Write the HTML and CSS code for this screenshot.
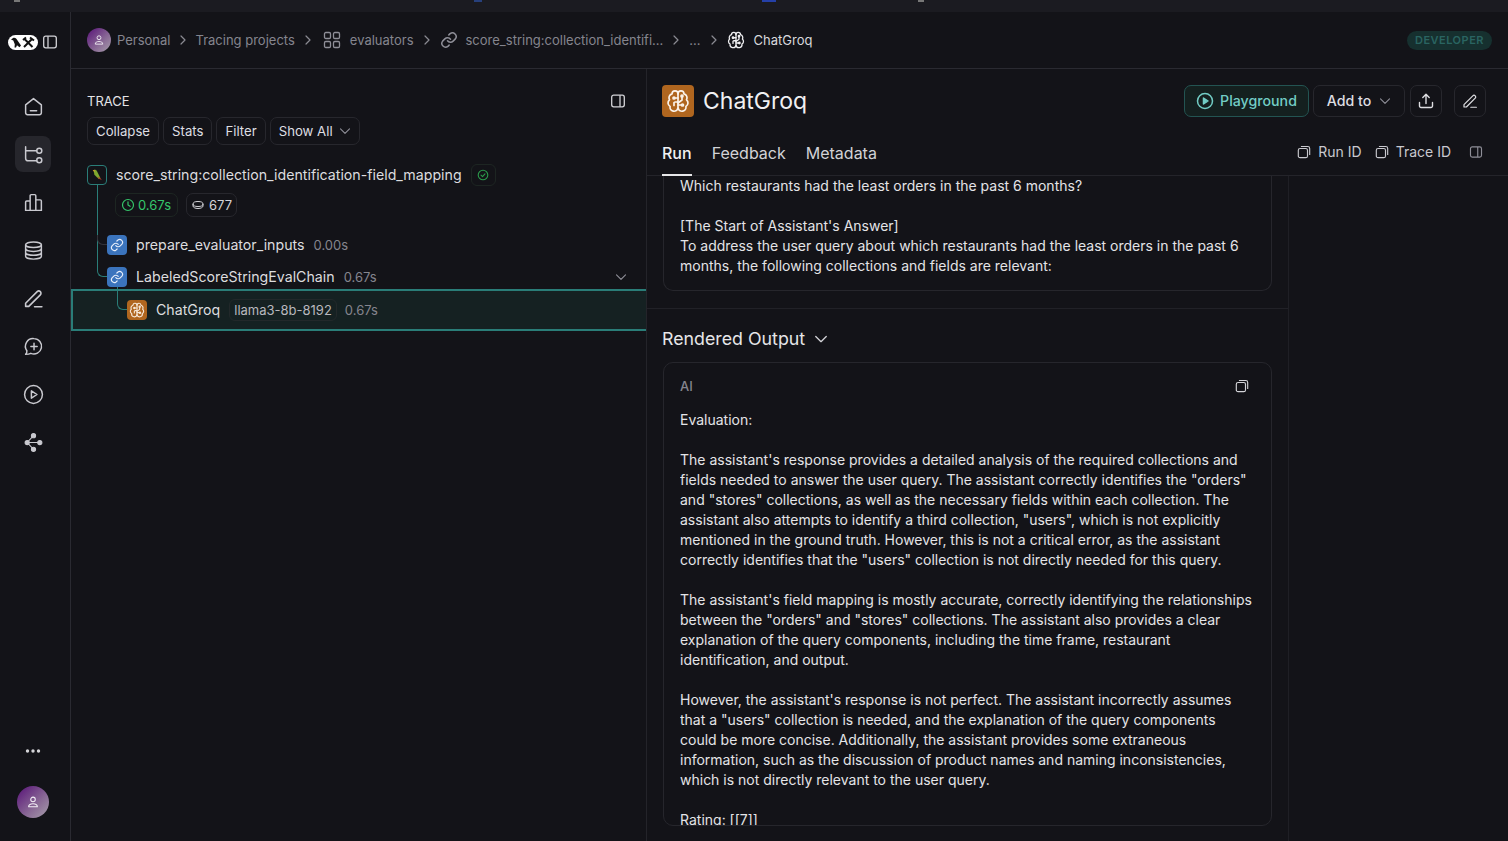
FILE: index.html
```html
<!DOCTYPE html>
<html lang="en">
<head>
<meta charset="utf-8">
<title>ChatGroq</title>
<link rel="stylesheet" href="styles.css">
</head>
<body>
<svg class="defs" width="0" height="0" aria-hidden="true">
  <symbol id="brain" viewBox="0 0 24 24" fill="none" stroke="currentColor" stroke-width="1.7" stroke-linecap="round" stroke-linejoin="round">
    <path d="M12 5a3 3 0 0 0-6-.1 4 4 0 0 0-2.500 5.900 4 4 0 0 0 .6 6.600A4 4 0 0 0 12 19z"/>
    <path d="M12 5a3 3 0 0 1 6-.1 4 4 0 0 1 2.500 5.900 4 4 0 0 1-.6 6.600A4 4 0 0 1 12 19"/>
    <path d="M12 9H9.500M9 13h3M8 16.500v-3M16 8v3l-4 3M15.500 16l-3.500 0"/>
    <circle cx="8" cy="9" r="1"/><circle cx="16" cy="7" r="1"/><circle cx="16.500" cy="16" r="1"/>
  </symbol>
  <symbol id="chain" viewBox="0 0 24 24" fill="none" stroke="currentColor" stroke-width="2" stroke-linecap="round" stroke-linejoin="round">
    <path d="M10 13a5 5 0 0 0 7.500.5l3-3a5 5 0 0 0-7-7l-1.700 1.700"/>
    <path d="M14 11a5 5 0 0 0-7.500-.5l-3 3a5 5 0 0 0 7 7l1.700-1.700"/>
  </symbol>
  <symbol id="copy" viewBox="0 0 16 16" fill="none" stroke="currentColor" stroke-width="1.300" stroke-linejoin="round">
    <rect x="1.500" y="4" width="10.500" height="10.500" rx="2"/>
    <path d="M4.500 1.700h7.800a2.200 2.200 0 0 1 2.200 2.200v7.600"/>
  </symbol>
  <symbol id="panel" viewBox="0 0 16 16" fill="none" stroke="currentColor" stroke-width="1.300">
    <rect x="1.700" y="2.200" width="12.600" height="11.600" rx="2"/>
    <path d="M10 2.200v11.600"/>
  </symbol>
  <symbol id="panel-left" viewBox="0 0 16 16" fill="none" stroke="currentColor" stroke-width="1.300">
    <rect x="1.700" y="2.200" width="12.600" height="11.600" rx="2"/>
    <path d="M6 2.200v11.600"/>
  </symbol>
  <symbol id="pen" viewBox="0 0 20 20" fill="none" stroke="currentColor" stroke-width="1.500" stroke-linecap="round" stroke-linejoin="round">
    <path d="M2.500 17.500v-3L13.500 3.500a2.100 2.100 0 0 1 3 3L5.500 17.500zM11 17.800h7"/>
  </symbol>
  <symbol id="chev" viewBox="0 0 12 12" fill="none" stroke="currentColor" stroke-width="1.100" stroke-linecap="round" stroke-linejoin="round">
    <path d="M1.500 3.800 6 8.300l4.500-4.500"/>
  </symbol>
  <symbol id="crumb" viewBox="0 0 12 12" fill="none" stroke="currentColor" stroke-width="1.200" stroke-linecap="round" stroke-linejoin="round">
    <path d="m4 2 4 4-4 4"/>
  </symbol>
  <symbol id="person" viewBox="0 0 16 16" fill="none" stroke="currentColor" stroke-width="1.200" stroke-linejoin="round">
    <circle cx="8" cy="5" r="2.600"/>
    <path d="M3 13.500c0-2.500 2-3.500 5-3.500s5 1 5 3.500z"/>
  </symbol>
</svg>

<div class="topstrip">
  <i class="speck speck-grey"></i>
  <i class="speck speck-blue"></i>
  <i class="speck speck-blue2"></i>
  <i class="speck speck-grey2"></i>
</div>

<div class="app">
  <nav class="sidebar">
    <div class="brand">
      <svg class="logo" viewBox="0 0 30 15">
        <rect x="0" y="0" width="30" height="15" rx="7.500" fill="#fff"/>
        <path d="M5.500 2.800c1.500-.4 2.700.5 3.700 2.200l3.800 5.500-1.500 1.700-2.500-2-1 2.300H6.500l.3-3.300-1.500-3.700-2.300-1z" fill="#111"/>
        <path d="M16 3.500l8.500 8.500M24.500 3.500l-8.500 8.500M15 5l3-2.500M22 2.500l4 3" stroke="#111" stroke-width="2" fill="none"/>
      </svg>
      <svg class="ic16 light"><use href="#panel-left"/></svg>
    </div>
    <ul class="navlist">
      <li class="navitem">
        <svg viewBox="0 0 20 20" fill="none" stroke="currentColor" stroke-width="1.400" stroke-linejoin="round" stroke-linecap="round"><path d="M2.500 8.500 10 2.500l7.500 6V16a1.800 1.800 0 0 1-1.800 1.800H4.300A1.800 1.800 0 0 1 2.500 16zM7 14h6"/></svg>
      </li>
      <li class="navitem active">
        <svg viewBox="0 0 20 20" fill="none" stroke="currentColor" stroke-width="1.400" stroke-linecap="round"><path d="M2.500 2.500v11a2.500 2.500 0 0 0 2.500 2.500h8M2.500 6.500h10.500"/><circle cx="15.500" cy="6.500" r="2.400"/><circle cx="15.500" cy="15.500" r="2.400"/></svg>
      </li>
      <li class="navitem">
        <svg viewBox="0 0 20 20" fill="none" stroke="currentColor" stroke-width="1.400" stroke-linejoin="round"><path d="M2.500 17.500V9.500a1 1 0 0 1 1-1h3.300v9zM6.800 17.500V3.500a1 1 0 0 1 1-1h3.400a1 1 0 0 1 1 1v14zM12.200 17.500V7.500h4.300a1 1 0 0 1 1 1v9zM1.800 17.500h16.400"/></svg>
      </li>
      <li class="navitem">
        <svg viewBox="0 0 20 20" fill="none" stroke="currentColor" stroke-width="1.400"><ellipse cx="10" cy="4.500" rx="7.500" ry="2.700"/><path d="M2.500 4.500v11c0 1.500 3.400 2.700 7.500 2.700s7.500-1.200 7.500-2.700v-11M2.500 8.200c0 1.500 3.400 2.700 7.500 2.700s7.500-1.200 7.500-2.700M2.500 11.900c0 1.500 3.400 2.700 7.500 2.700s7.500-1.200 7.500-2.700"/></svg>
      </li>
      <li class="navitem">
        <svg><use href="#pen"/></svg>
      </li>
      <li class="navitem">
        <svg viewBox="0 0 20 20" fill="none" stroke="currentColor" stroke-width="1.400" stroke-linecap="round" stroke-linejoin="round"><path d="M10.500 2.500a7.300 7.300 0 1 1-3 14c-1.500.8-3.500 1-5 1 .8-.8 1.300-2 1.200-3.500a7.300 7.300 0 0 1 6.800-11.500zM10.500 7v6M7.500 10h6"/></svg>
      </li>
      <li class="navitem">
        <svg viewBox="0 0 20 20" fill="none" stroke="currentColor" stroke-width="1.400" stroke-linejoin="round"><circle cx="10" cy="10" r="8.500"/><path d="M8 6.500v7l5.300-3.500z"/></svg>
      </li>
      <li class="navitem">
        <svg viewBox="0 0 20 20" fill="currentColor" stroke="currentColor" stroke-width="1"><circle cx="10" cy="3.500" r="2"/><circle cx="4" cy="10" r="2"/><circle cx="16" cy="10" r="2"/><circle cx="10" cy="16.500" r="2"/><path d="M4 10h12M10 3.500 4 10l6 6.500" fill="none"/></svg>
      </li>
    </ul>
    <div class="sidebar-foot">
      <svg class="dots" viewBox="0 0 16 4" fill="currentColor"><circle cx="2.500" cy="2" r="1.700"/><circle cx="8" cy="2" r="1.700"/><circle cx="13.500" cy="2" r="1.700"/></svg>
      <div class="avatar avatar-lg"><svg class="ic14"><use href="#person"/></svg></div>
    </div>
  </nav>

  <div class="main">
    <header class="topbar">
      <div class="avatar avatar-sm"><svg class="ic12"><use href="#person"/></svg></div>
      <span class="crumb c1">Personal</span>
      <svg class="sep"><use href="#crumb"/></svg>
      <span class="crumb">Tracing projects</span>
      <svg class="sep"><use href="#crumb"/></svg>
      <svg class="ic18 mute grid-ic" viewBox="0 0 18 18" fill="none" stroke="currentColor" stroke-width="1.300"><rect x="1.500" y="1.500" width="6" height="6" rx="1.300"/><rect x="10.500" y="1.500" width="6" height="6" rx="1.300"/><rect x="1.500" y="10.500" width="6" height="6" rx="1.300"/><rect x="10.500" y="10.500" width="6" height="6" rx="1.300"/></svg>
      <span class="crumb">evaluators</span>
      <svg class="sep"><use href="#crumb"/></svg>
      <svg class="ic18 mute chain-ic"><use href="#chain"/></svg>
      <span class="crumb">score_string:collection_identifi...</span>
      <svg class="sep"><use href="#crumb"/></svg>
      <span class="crumb">...</span>
      <svg class="sep"><use href="#crumb"/></svg>
      <svg class="ic18 bright"><use href="#brain"/></svg>
      <span class="crumb current">ChatGroq</span>
      <span class="badge">DEVELOPER</span>
    </header>

    <div class="panes">
      <section class="trace">
        <div class="trace-head">
          <h2 class="trace-title">TRACE</h2>
          <svg class="ic16 light"><use href="#panel"/></svg>
        </div>
        <div class="trace-buttons">
          <span class="chip">Collapse</span>
          <span class="chip">Stats</span>
          <span class="chip">Filter</span>
          <span class="chip">Show All <svg class="ic12 mute"><use href="#chev"/></svg></span>
        </div>

        <div class="tree">
          <div class="line-root"></div>
          <div class="elbow elbow-a"></div>
          <div class="elbow elbow-b"></div>
          <div class="elbow elbow-c"></div>

          <div class="node node-root">
            <span class="nodeicon parrot">
              <svg viewBox="0 0 16 16"><path d="M4 2.500c1.500-.8 3-.3 4 1.200l4 8-2 1-5-5z" fill="#7fa82e"/><path d="M3 2.800 5 2l.5 2.500z" fill="#e0a030"/><path d="M9 10l3 1.700 1.500 2-3.500-1.500z" fill="#b33a2a"/></svg>
            </span>
            <span class="nodename">score_string:collection_identification-field_mapping</span>
            <span class="okbadge">
              <svg class="ic12" viewBox="0 0 12 12" fill="none" stroke="#2b9a4b" stroke-width="1.100" stroke-linecap="round" stroke-linejoin="round"><circle cx="6" cy="6" r="4.800"/><path d="m4 6.200 1.500 1.400L8 4.800"/></svg>
            </span>
          </div>
          <div class="metrics">
            <span class="metric good">
              <svg class="ic14" viewBox="0 0 14 14" fill="none" stroke="currentColor" stroke-width="1.200" stroke-linecap="round"><circle cx="7" cy="7" r="5.500"/><path d="M7 3.800V7l2 1.300"/></svg>
              0.67s
            </span>
            <span class="metric count">
              <svg class="ic12 light" viewBox="0 0 12 12" fill="none" stroke="currentColor" stroke-width="1"><ellipse cx="6" cy="5" rx="5" ry="2.500"/><path d="M1 5v2c0 1.400 2.200 2.500 5 2.500s5-1.100 5-2.500V5"/></svg>
              677
            </span>
          </div>

          <div class="node node-a">
            <span class="nodeicon blue"><svg class="ic14"><use href="#chain"/></svg></span>
            <span class="nodename">prepare_evaluator_inputs</span>
            <span class="latency">0.00s</span>
          </div>
          <div class="node node-b">
            <span class="nodeicon blue"><svg class="ic14"><use href="#chain"/></svg></span>
            <span class="nodename">LabeledScoreStringEvalChain</span>
            <span class="latency">0.67s</span>
            <svg class="ic12 mute push"><use href="#chev"/></svg>
          </div>
          <div class="node node-c">
            <span class="nodeicon orange"><svg class="ic16"><use href="#brain"/></svg></span>
            <span class="nodename">ChatGroq</span>
            <span class="model">llama3-8b-8192</span>
            <span class="latency">0.67s</span>
          </div>
        </div>
      </section>

      <section class="detail">
        <div class="detail-head">
          <span class="runicon"><svg class="ic24"><use href="#brain"/></svg></span>
          <h1 class="run-title">ChatGroq</h1>
          <div class="actions">
            <span class="btn btn-play">
              <svg class="ic18" viewBox="0 0 18 18" fill="none" stroke="currentColor" stroke-width="1.500" stroke-linejoin="round"><circle cx="9" cy="9" r="7.500"/><path d="M7.500 6v6L12 9z" fill="currentColor"/></svg>
              Playground
            </span>
            <span class="btn btn-add">Add to <svg class="ic12 mute"><use href="#chev"/></svg></span>
            <span class="btn btn-icon btn-upload">
              <svg class="ic18" viewBox="0 0 18 18" fill="none" stroke="currentColor" stroke-width="1.400" stroke-linecap="round" stroke-linejoin="round"><path d="M9 11.500V2.500M5.800 5.500 9 2.300l3.200 3.200M2.500 10.500v3.500a1.500 1.500 0 0 0 1.500 1.500h10a1.500 1.500 0 0 0 1.500-1.500v-3.500"/></svg>
            </span>
            <span class="btn btn-icon btn-edit"><svg class="ic16"><use href="#pen"/></svg></span>
          </div>
        </div>

        <div class="tabs">
          <span class="tab tab-on">Run</span>
          <span class="tab">Feedback</span>
          <span class="tab">Metadata</span>
          <div class="tab-tools">
            <span class="tool"><svg class="ic14"><use href="#copy"/></svg>Run ID</span>
            <span class="tool"><svg class="ic14"><use href="#copy"/></svg>Trace ID</span>
            <svg class="ic14 mute panel-toggle"><use href="#panel"/></svg>
          </div>
        </div>

        <div class="scroll">
          <div class="column">
            <div class="card card-input">
              <p>Which restaurants had the least orders in the past 6 months?</p>
              <p>[The Start of Assistant's Answer]<br>To address the user query about which restaurants had the least orders in the past 6 months, the following collections and fields are relevant:</p>
            </div>
            <div class="section-head">
              <h3 class="section-title">Rendered Output</h3>
              <svg class="ic14 light"><use href="#chev"/></svg>
            </div>
            <div class="card card-output">
              <div class="role-row">
                <span class="role">AI</span>
                <svg class="ic14 light"><use href="#copy"/></svg>
              </div>
              <div class="output">
                <p>Evaluation:</p>
                <p>The assistant's response provides a detailed analysis of the required collections and fields needed to answer the user query. The assistant correctly identifies the "orders" and "stores" collections, as well as the necessary fields within each collection. The assistant also attempts to identify a third collection, "users", which is not explicitly mentioned in the ground truth. However, this is not a critical error, as the assistant correctly identifies that the "users" collection is not directly needed for this query.</p>
                <p>The assistant's field mapping is mostly accurate, correctly identifying the relationships between the "orders" and "stores" collections. The assistant also provides a clear explanation of the query components, including the time frame, restaurant identification, and output.</p>
                <p>However, the assistant's response is not perfect. The assistant incorrectly assumes that a "users" collection is needed, and the explanation of the query components could be more concise. Additionally, the assistant provides some extraneous information, such as the discussion of product names and naming inconsistencies, which is not directly relevant to the user query.</p>
                <p>Rating: [[7]]</p>
              </div>
            </div>
          </div>
        </div>
      </section>
    </div>
  </div>
</div>
</body>
</html>
```

FILE: styles.css
```css
* { box-sizing: border-box; }
html, body { margin: 0; padding: 0; height: 100%; overflow: hidden; }
body {
  background: #131318;
  color: #e4e4e7;
  font-family: Inter, "Liberation Sans", sans-serif;
  font-size: 14px;
  line-height: 20px;
  display: flex;
  flex-direction: column;
}
h1, h2, h3, p, ul { margin: 0; padding: 0; font-weight: 400; }
ul { list-style: none; }
svg { display: block; flex: none; }
.defs { position: absolute; }

.ic12 { width: 12px; height: 12px; }
.ic14 { width: 14px; height: 14px; }
.ic16 { width: 16px; height: 16px; }
.ic18 { width: 18px; height: 18px; }
.ic24 { width: 24px; height: 24px; }
.mute { color: #8f8f98; }
.light { color: #d4d4d8; }
.bright { color: #f0f0f2; }

.topstrip { height: 12px; background: #1b1b21; flex: none; position: relative; overflow: hidden; }
.speck { position: absolute; top: 0; height: 2px; }
.speck-grey { left: 14px; width: 6px; background: #777; }
.speck-blue { left: 474px; width: 8px; background: #27407c; }
.speck-blue2 { left: 762px; width: 14px; background: #2540a8; }
.speck-grey2 { left: 918px; width: 6px; background: #777; }

.app { flex: 1; display: flex; min-height: 0; }

.sidebar {
  width: 71px;
  flex: none;
  border-right: 1px solid #2a2a31;
  padding-right: 4px;
  display: flex;
  flex-direction: column;
  align-items: center;
}
.brand { height: 56px; width: 100%; display: flex; align-items: center; padding: 4px 0 0 8px; gap: 4px; flex: none; margin-bottom: 20px; }
.logo { width: 30px; height: 15px; }
.navlist { display: flex; flex-direction: column; gap: 12px; color: #c9c9cf; }
.navitem { width: 36px; height: 36px; border-radius: 8px; display: flex; align-items: center; justify-content: center; }
.navitem svg { width: 21px; height: 21px; }
.navitem.active { background: #26262c; }
.sidebar-foot { margin-top: auto; display: flex; flex-direction: column; align-items: center; padding-bottom: 23px; gap: 33px; color: #d4d4d8; }
.dots { width: 16px; height: 4px; }
.avatar { border-radius: 50%; background: linear-gradient(135deg, #5f1f7c 10%, #8a6a96 60%, #a79fab); display: flex; align-items: center; justify-content: center; color: #f2eef5; flex: none; }
.avatar-lg { width: 32px; height: 32px; }
.avatar-sm { width: 24px; height: 24px; }

.main { flex: 1; min-width: 0; display: flex; flex-direction: column; }
.topbar { height: 57px; flex: none; border-bottom: 1px solid #2a2a31; display: flex; align-items: center; padding: 0 16px; font-size: 13px; }
.crumb { color: #85858e; line-height: 20px; }
.crumb.c1 { margin: 0 -1px 0 6px; }
.crumb.current { color: #d8d8dc; margin-left: 9px; }
.sep { width: 12px; height: 12px; color: #8a8a92; margin: 0 7px; }
.grid-ic { margin: 0 9px 0 2px; }
.chain-ic { margin-right: 8px; }
.badge { margin-left: auto; background: #16302f; color: #2a6461; font-size: 11px; font-weight: 600; letter-spacing: .5px; padding: 0 8px; height: 19px; line-height: 19px; border-radius: 10px; }

.panes { flex: 1; display: flex; min-height: 0; }

.trace { width: 576px; flex: none; border-right: 1px solid #24242a; display: flex; flex-direction: column; }
.trace-head { display: flex; align-items: center; justify-content: space-between; padding: 22px 20px 0 16px; height: 42px; }
.trace-title { font-size: 13px; line-height: 20px; color: #e4e4e7; }
.trace-buttons { display: flex; gap: 4px; padding: 6px 16px 0; }
.chip { height: 28px; padding: 0 8px; border: 1px solid #27272d; border-radius: 7px; font-size: 13.200px; display: flex; align-items: center; gap: 6px; color: #dedee2; }

.tree { position: relative; padding-top: 14px; }
.node { display: flex; align-items: center; font-size: 14.200px; }
.node-root { height: 32px; padding-left: 16px; }
.nodeicon { width: 20px; height: 20px; border-radius: 4px; display: flex; align-items: center; justify-content: center; flex: none; margin-right: 9px; }
.parrot { border: 1px solid #2a7d78; }
.parrot svg { width: 14px; height: 14px; }
.blue { background: #3b74bd; color: #e7eefa; }
.orange { background: #b0661f; color: #f6e8d8; }
.nodename { color: #dcdcdf; }
.okbadge { width: 25px; height: 22px; margin-left: 9px; border: 1px solid #1d2522; border-radius: 6px; display: flex; align-items: center; justify-content: center; }
.metrics { display: flex; gap: 8px; padding: 2px 0 0 44px; height: 38px; align-items: flex-start; }
.metric { height: 24px; padding: 0 4px 0 5px; border: 1px solid #27272d; border-radius: 7px; display: flex; align-items: center; font-size: 13px; color: #d4d4d8; }
.metric.count { gap: 5px; }
.metric.good { gap: 3px; color: #35c66b; border-color: #1d2622; padding-right: 6px; }
.node-a { height: 32px; padding-left: 36px; }
.node-b { height: 32px; padding-left: 36px; padding-right: 19px; }
.node-c { height: 42px; margin-top: -4px; padding-left: 54px; border-top: 2px solid #2a7d78; border-bottom: 2px solid #2a7d78; border-left: 2px solid #2a7d78; background: #152122; }
.latency { color: #85858e; font-size: 13px; margin-left: 9px; }
.model { margin-left: 9px; height: 22px; padding: 0 4px; border: 1px solid #22282a; border-radius: 6px; font-size: 13px; color: #b8b8be; display: flex; align-items: center; }
.model + .latency { margin-left: 8px; }
.push { margin-left: auto; }

.line-root { position: absolute; left: 26px; top: 40px; width: 1px; height: 62px; background: #2a7d78; }
.elbow { position: absolute; border-left: 1px solid #2a7d78; border-bottom: 1px solid #2a7d78; border-bottom-left-radius: 6px; }
.elbow-a { left: 26px; top: 90px; width: 10px; height: 10px; border-color: #33333a; }
.elbow-b { left: 26px; top: 100px; width: 10px; height: 32px; }
.elbow-c { left: 46px; top: 142px; width: 10px; height: 23px; z-index: 1; }

.detail { flex: 1; min-width: 0; display: flex; flex-direction: column; }
.detail-head { display: flex; align-items: center; height: 64px; flex: none; padding: 0 22px 0 15px; }
.runicon { width: 32px; height: 32px; border-radius: 4px; background: #b0661f; color: #fbf3ea; display: flex; align-items: center; justify-content: center; }
.run-title { font-size: 23px; line-height: 32px; margin-left: 9px; color: #f0f0f2; }
.actions { margin-left: auto; display: flex; align-items: center; gap: 4px; }
.btn { height: 32px; border: 1px solid #27272d; border-radius: 7px; display: flex; align-items: center; justify-content: center; font-size: 14.200px; font-weight: 500; color: #dedee2; }
.btn-play { width: 125px; gap: 6px; color: #72cdc5; border-color: #235452; background: #14201f; }
.btn-add { width: 92px; gap: 8px; }
.btn-icon { width: 32px; }
.btn-upload { margin-left: 1px; }
.btn-edit { margin-left: 8px; }

.tabs { display: flex; align-items: flex-end; height: 43px; flex: none; border-bottom: 1px solid #24242a; padding: 0 25px 0 15px; gap: 20px; }
.tab { font-size: 16px; line-height: 22px; height: 33px; color: #d2d2d6; }
.tab-on { color: #f0f0f2; font-weight: 500; border-bottom: 2px solid #e6e6e8; margin-bottom: -1px; height: 34px; }
.tab-tools { margin-left: auto; display: flex; align-items: center; gap: 13px; height: 42px; padding-bottom: 4px; font-size: 14px; color: #c9c9cf; }
.tool { display: flex; align-items: center; gap: 7px; }
.panel-toggle { margin-left: 5px; }

.scroll { flex: 1; min-height: 0; overflow: hidden; }
.column { width: 642px; height: 100%; border-right: 1px solid #1f1f25; padding: 0 16px; }
.card { border: 1px solid #26262c; border-radius: 10px; padding: 0 16px; }
.card-input { border-top: 0; border-top-left-radius: 0; border-top-right-radius: 0; height: 115px; }
.card p + p, .output p + p { margin-top: 20px; }
.section-head { margin: 17px -16px 0; padding: 7px 15px 0; border-top: 1px solid #212127; display: flex; align-items: center; gap: 9px; height: 54px; }
.section-title { font-size: 17.800px; line-height: 26px; color: #e6e6e8; }
.card-output { height: 464px; overflow: hidden; }
.role-row { display: flex; align-items: center; justify-content: space-between; height: 46px; margin-bottom: 1px; padding-right: 6px; }
.role { font-size: 13px; font-weight: 500; color: #85858e; }
.output { height: 415px; overflow: hidden; }
```
